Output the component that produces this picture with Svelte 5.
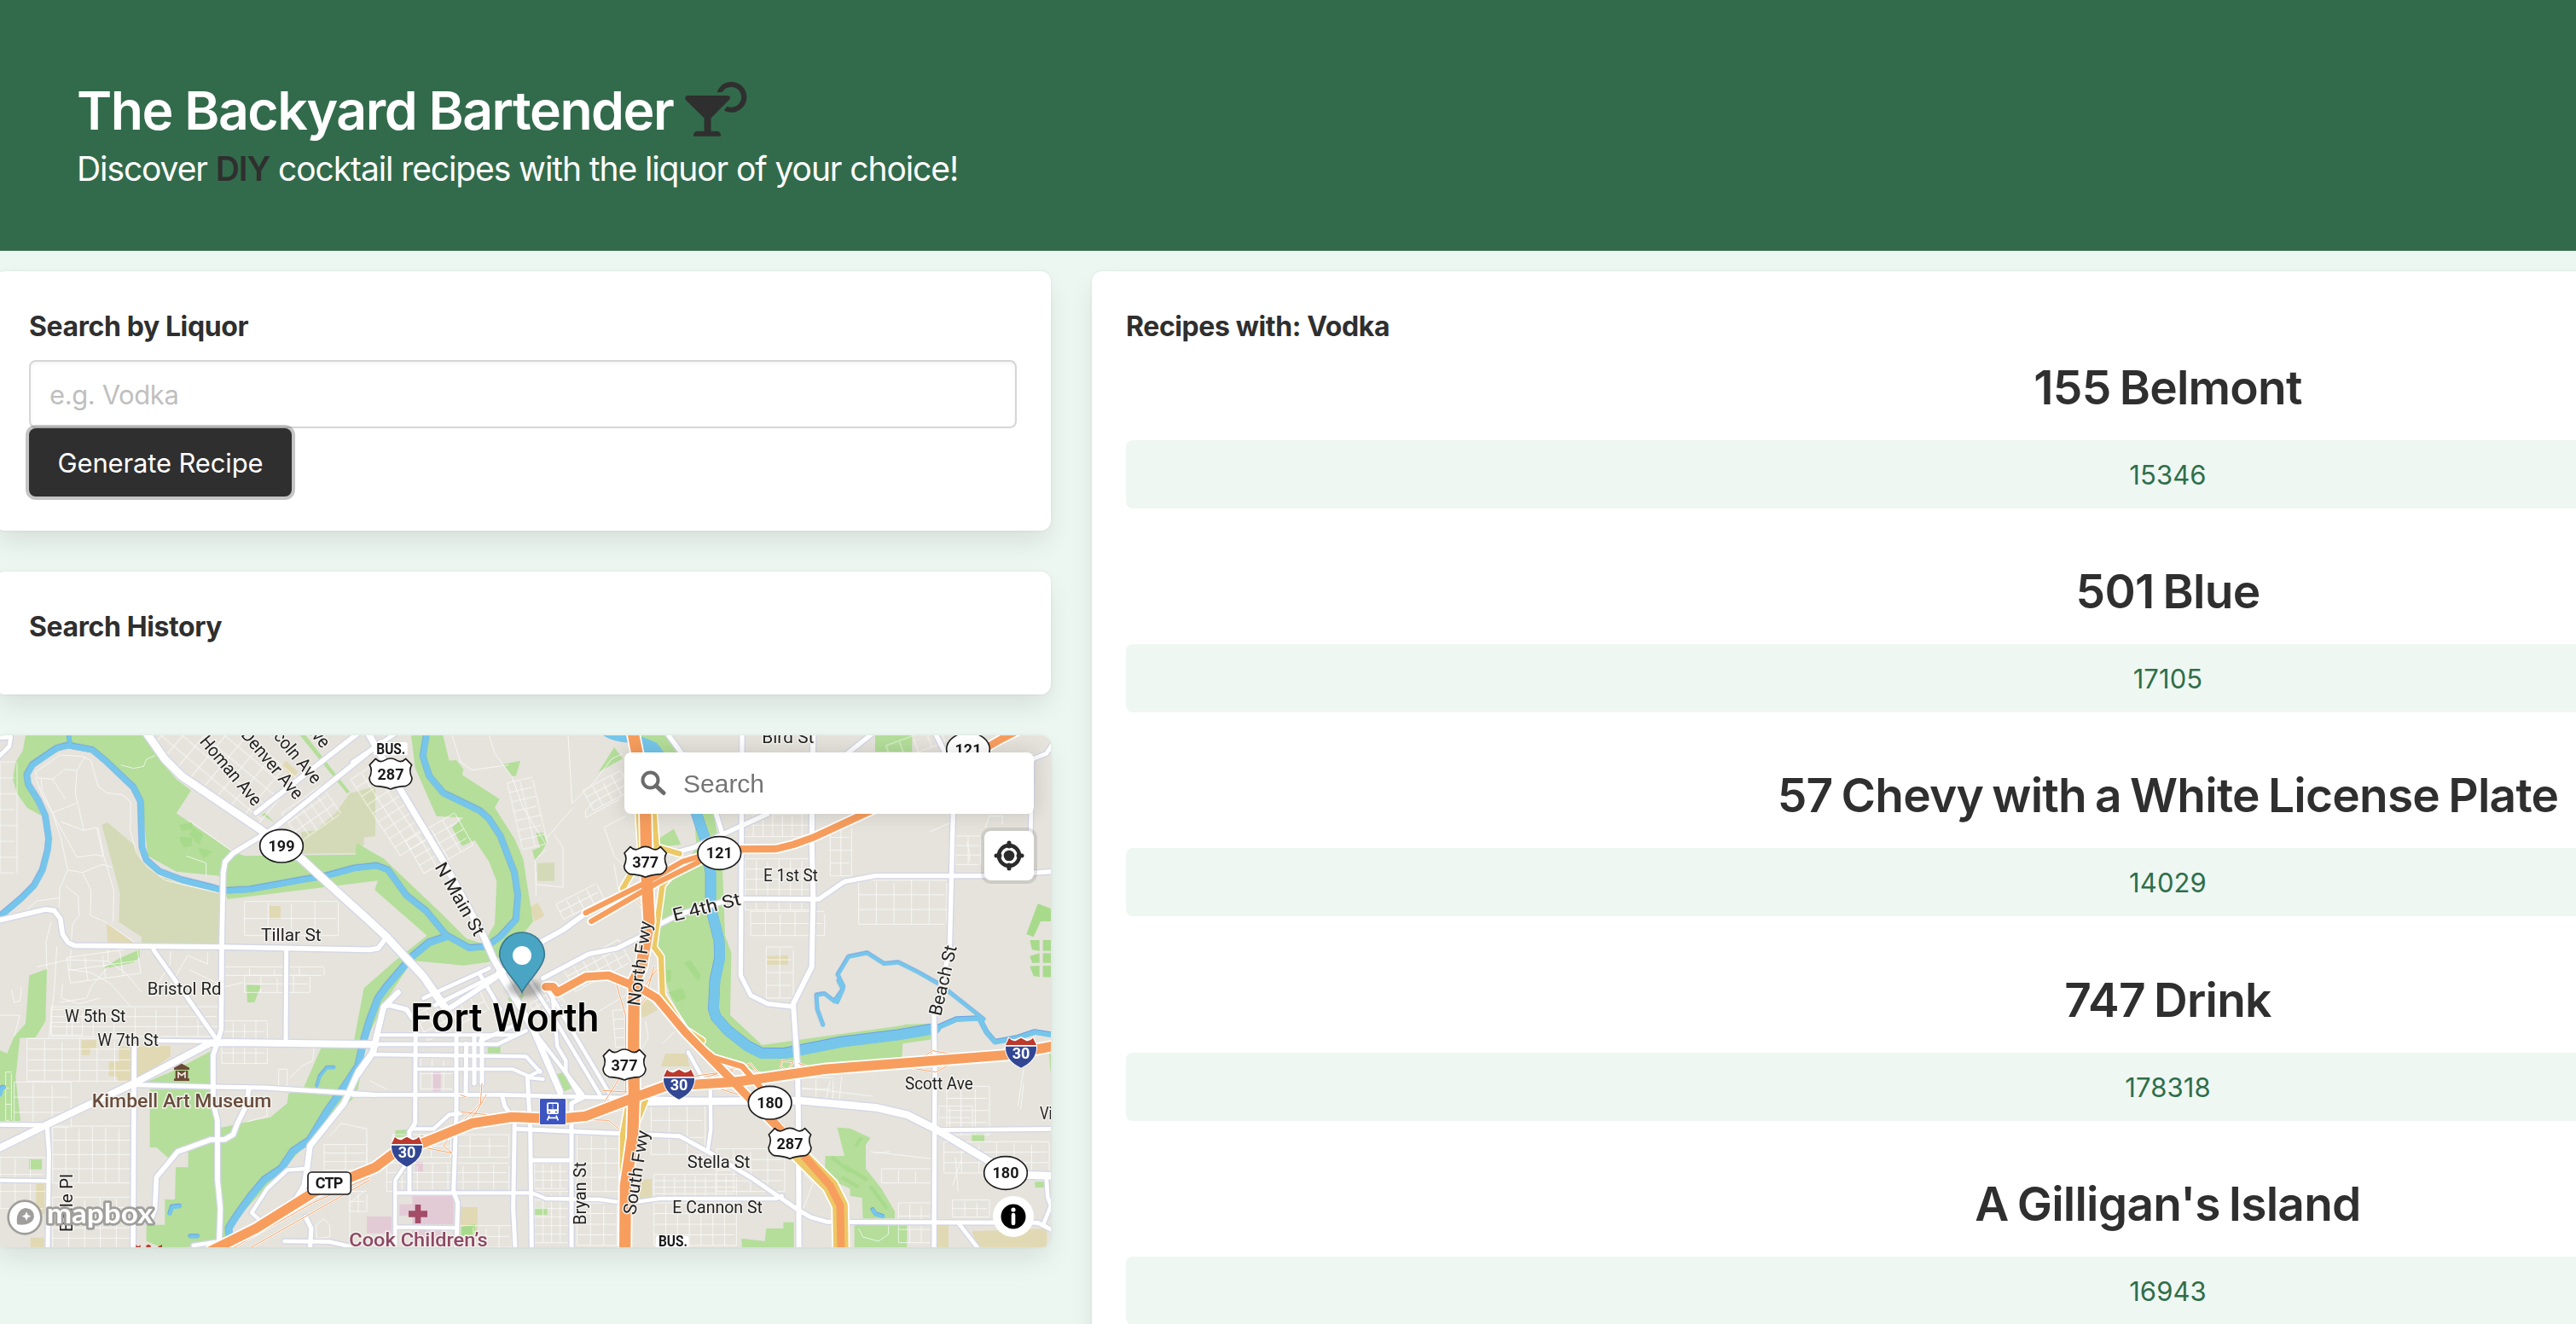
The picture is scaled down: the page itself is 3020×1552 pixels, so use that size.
<script>
  const recipes = [
    { name: '155 Belmont', id: '15346' },
    { name: '501 Blue', id: '17105' },
    { name: '57 Chevy with a White License Plate', id: '14029' },
    { name: '747 Drink', id: '178318' },
    { name: "A Gilligan's Island", id: '16943' },
  ];

  const parks = [
    '90,36 510,36 560,120 620,190 672,230 620,310 810,440 860,460 1250,455 1254,415 1350,470 1340,545 800,612 770,530 620,515 520,460 500,280 470,220 325,90 240,75 115,140 90,190 110,230 145,318 95,290 60,240 45,190 55,130 80,90',
    '1260,420 1350,470 1550,660 1640,750 1700,770 1740,700 1747,550 1720,480 1670,405 1625,425 1590,360 1630,325 1535,320 1460,150 1446,36 1558,36 1580,125 1605,123 1630,155 1625,175 1757,260 1740,290 1810,400 1840,470 1854,560 1875,690 1820,760 1740,830 1630,845 1450,828 1360,965 1290,1100 1245,1110 1280,925 1400,820 1502,740 1318,580 1338,520 1260,553',
    '527,1280 752,1280 765,1390 780,1415 870,1395 950,1380 1010,1330 1015,1295 1068,1275 1130,1134 1285,1134 1255,1300 1090,1460 820,1750 800,1812 700,1826 600,1850 515,1815 515,1757 580,1757 580,1668 615,1668 618,1555 662,1555 662,1495 590,1520 550,1485 527,1485',
    '490,1265 600,1220 745,1145 745,1270',
    '103,880 165,858 160,1040 125,1098 70,1100 55,1240 72,1392 -20,1392 -20,1135 25,1155 50,1095 90,1050',
    '102,1527 147,1527 147,1562 102,1562',
    '358,858 420,820 490,790 492,815 470,835',
    '867,913 922,915 910,935 895,975 870,975',
    '1055,36 1075,36 1230,235 1220,240',
    '920,315 932,308 965,342',
    '2320,600 2400,500 2450,430 2440,312 2510,312 2540,480 2550,740 2572,800 2568,1020 2680,1125 3175,1056 3185,1052 3280,1050 3280,1105 3175,1120 3172,1170 2810,1200 2690,1222 2600,1200 2460,1130 2410,1050 2360,960 2310,800 2320,720',
    '2250,36 2350,36 2382,96 2300,96',
    '2105,165 2160,78 2190,118',
    '1770,137 1830,125 1815,178 1800,180',
    '1885,380 1910,378 1923,415 1905,445 1882,475 1872,440 1900,430',
    '2315,400 2370,365 2395,420 2310,430',
    '3078,36 3208,36 3208,94 3078,94',
    '2945,1415 2990,1418 3062,1452 3045,1475 3045,1560 3100,1630 3147,1710 3147,1735 3035,1735 3032,1662 2990,1655 2990,1630 2900,1590 2903,1515 2970,1515',
    '3005,1758 3190,1758 3190,1840 3005,1840',
    '2608,1805 2690,1815 2695,1770 2755,1770 2755,1748 2792,1748 2792,1840 2610,1840',
    '3418,1438 3462,1438 3462,1463 3418,1463',
    '3640,1606 3672,1606 3672,1626 3640,1626',
    '3690,1150 3700,1150 3700,1215 3694,1215',
    '1715,1130 1760,1130 1760,1155 1715,1155',
    '1955,1230 2000,1212 2015,1275 1980,1290 1965,1250',
    '1785,960 1845,945 1830,975 1800,985',
    '1880,1698 1925,1698 1925,1722 1880,1722',
    '1390,1425 1435,1422 1435,1448 1390,1448',
    '2000,1318 2020,1318 2010,1335 1998,1335',
  ];
  const lushParks = [
    '3650,628 3696,645 3696,690 3660,690 3635,745 3610,735',
    '3622,756 3656,756 3656,794 3630,790', '3668,756 3696,756 3696,794 3668,794',
    '3622,812 3656,802 3656,836 3630,836', '3668,802 3696,802 3696,836 3668,836',
    '3622,848 3656,846 3656,886 3635,882', '3668,846 3696,846 3696,886 3668,886',
    '630,350 675,342 680,365 640,372', '630,392 675,395 675,425 645,430', '680,360 715,385 700,420 665,385', '695,430 750,445 715,468',
    '2340,860 2360,860 2360,900 2340,905', '2405,835 2430,828 2465,880 2455,900', '2350,940 2400,925 2415,960 2380,975',
    '1620,1765 1670,1755 1675,1800 1615,1800',
  ];
  const golf = [
    '358,350 378,342 470,420 500,480 560,530 640,560 770,590 778,768 498,768 498,745 418,692 422,590',
    '1060,376 1110,370 1180,310 1230,240 1320,215 1320,390 1280,395 1280,420 1255,450 1060,452',
    '1890,485 1950,483 1950,548 1890,548',
  ];
  const schools = [
    '375,695 470,765 378,765', '287,1108 345,1108 345,1135 320,1135 315,1160 287,1160',
    '418,1130 600,1128 600,1165 480,1250 418,1255 410,1235 383,1235 383,1183 418,1183',
    '1620,1695 1680,1695 1680,1805 1620,1805', '2250,1597 2292,1597 2292,1665 2250,1665',
    '2340,1155 2415,1155 2425,1200 2325,1200', '3290,1758 3336,1758 3336,1840 3290,1840',
    '3418,1780 3682,1770 3682,1840 3440,1840', '2698,812 2772,810 2772,842 2698,842',
    '948,636 987,636 987,683 948,683', '127,1610 157,1610 157,1720 127,1720', '107,1802 155,1802 155,1840 107,1840',
    '1005,125 1048,165 1030,185 990,145', '1865,640 1892,625 1915,670 1880,690', '2240,980 2280,965 2315,1000 2260,1030',
  ];
  const hospitals = [
    '1450,1655 1595,1655 1595,1755 1450,1755', '1405,1685 1450,1685 1450,1725 1405,1725',
    '1290,1728 1377,1728 1377,1787 1290,1787', '1522,1220 1550,1220 1550,1288 1522,1288',
    '1462,1535 1488,1535 1488,1570 1462,1570',
    '1450,1775 1565,1775 1565,1815 1450,1815',
  ];

  // Grids of small residential streets: x, y, width, height, columns, rows, rotation
  const blocks = [
    [2615, 312, 240, 80, 7, 2, 0], [2620, 470, 240, 180, 6, 5, 0], [2920, 350, 75, 180, 2, 4, 0],
    [2640, 655, 260, 85, 5, 2, 0], [3020, 545, 310, 155, 5, 3, 0], [3360, 390, 90, 100, 2, 3, 0],
    [2695, 780, 95, 180, 2, 4, 0], [790, 850, 350, 30, 4, 1, 0], [860, 620, 330, 120, 4, 2, 0],
    [95, 1102, 370, 150, 6, 4, 0], [50, 1255, 200, 160, 3, 3, 0], [185, 1410, 280, 200, 6, 4, 0],
    [185, 1660, 280, 180, 5, 5, 0], [0, 1520, 160, 180, 3, 3, 0], [180, 990, 590, 105, 8, 3, 0],
    [780, 1040, 160, 150, 4, 4, 0], [1140, 1475, 150, 90, 2, 3, 0], [1230, 1640, 60, 70, 2, 2, 0],
    [1360, 1540, 430, 100, 8, 3, 0], [1380, 1440, 410, 80, 6, 2, 0], [1620, 1760, 180, 76, 4, 2, 0],
    [1880, 1540, 120, 90, 4, 3, 0], [1880, 1640, 120, 180, 4, 6, 0], [2030, 1440, 150, 200, 3, 4, 0],
    [2300, 1580, 290, 90, 8, 4, 0], [2300, 1680, 290, 150, 7, 4, 0], [2030, 1680, 140, 150, 3, 4, 0],
    [2520, 1490, 240, 150, 4, 4, 0], [2810, 1240, 120, 80, 2, 2, 0], [3300, 1340, 120, 80, 3, 2, 0],
    [3320, 1465, 370, 110, 6, 3, 0], [3330, 1270, 150, 170, 3, 4, 0], [3160, 1680, 120, 140, 3, 3, 0],
    [3350, 1670, 130, 60, 3, 2, 0], [3100, 1560, 180, 50, 3, 1, 0], [1480, 1170, 120, 110, 3, 2, 0],
    [2290, 1330, 190, 180, 3, 3, 0], [20, 1220, 20, 170, 1, 3, 0], [860, 880, 230, 60, 4, 2, 0],
    [560, 10, 460, 240, 8, 5, 40], [1010, 250, 170, 120, 5, 3, -35], [1445, 350, 200, 130, 4, 4, -30],
    [1810, 190, 90, 240, 2, 7, -13], [2060, 190, 150, 80, 4, 3, -28], [1960, 590, 160, 60, 4, 2, -27],
    [1990, 800, 220, 90, 6, 3, -28], [1470, 960, 240, 100, 6, 3, -27], [1870, 950, 110, 60, 5, 3, -30],
    [180, 1000, 110, 90, 2, 2, 0], [240, 800, 250, 90, 4, 2, -8], [0, 130, 60, 390, 1, 7, 0],
    [1310, 130, 130, 320, 3, 9, -33], [2160, 1000, 80, 130, 2, 4, -5], [3120, 36, 200, 60, 4, 1, -20],
  ];
  const gridPath = ([x, y, w, h, c, r]) => {
    let d = '';
    for (let i = 0; i <= c; i++) {
      const px = x + (w * i) / c;
      d += `M${px} ${y + (i % 3) * 5}V${y + h}`;
    }
    for (let j = 0; j <= r; j++) {
      const py = y + (h * j) / r;
      d += `M${x} ${py}H${x + w - (j % 2) * 8}`;
    }
    return d;
  };

  const lanes = [
    'M125 185L150 250L185 310L215 400L238 510L210 575L208 640M130 185L125 165L210 105L290 110L320 125L345 215L375 238L430 245L460 270L458 370L480 450L520 500L580 545L680 570L770 590',
    'M145 190L148 230L200 340L235 400L270 465L340 455L362 462L340 360L295 370L265 240L270 160L300 110M130 185L185 190L230 155L270 160M185 190L230 260M185 308L268 275M215 340L295 370M240 510L290 518L360 490L395 500M290 518L320 580L318 670L355 685M345 360L365 460L400 580L398 690M232 568L275 600L278 670L255 700L250 770M360 685L475 765',
    'M95 648L130 618L205 608M180 690L162 760L165 860M425 140L470 152L505 145L515 120L545 107M665 335L815 442M655 460L725 485L725 530',
    'M200 780L190 940L172 1100M250 790L245 860L320 870L390 910L460 990M130 850L240 825L380 830L440 870L500 940M380 790V830M380 850L320 920L305 960L210 975M600 795L598 840L550 920M660 810L620 880L590 930M660 810L730 840V800M665 860L790 920L855 905',
    'M40 930L50 975L70 970L75 920M220 910L215 960L280 980L350 960M0 1020L70 1020L50 1095',
    'M1105 1130L1100 1180L1060 1200L1020 1240M980 1210H1010V1270H980ZM870 1395L940 1375L935 1300M1160 1445L1200 1400L1290 1420V1540M1230 1840L1230 1680L1280 1640M1110 1760L1140 1735L1160 1760L1160 1800L1115 1805Z',
    'M1590 36L1620 130L1660 158L1790 140M1720 36L1740 100L1800 180L1840 290L1920 420M1920 438L1882 475L1885 560L1980 570M1998 36L2012 275L2090 200L2150 120L2190 100M2012 295L1920 400M1950 385L1980 430V570M2125 360L2160 460L2240 540M2125 360L2200 320M1885 520V600M2095 265L2060 300L2060 325L2180 260M2160 490L2175 580',
    'M3600 1210L3580 1340M3380 1530L3350 1620M3600 1260L3590 1350M2820 1275L3070 1305M3060 1500L3280 1525M3080 1505L3130 1500M3360 1520L3370 1640M2830 1580L2860 1610L2825 1700M3020 1770L3035 1800L3090 1815L3125 1790L3125 1760M2960 1235L2950 1340M2920 1250L2900 1340M3270 375L3340 345M3465 360L3480 320H3525V350M3400 410L3410 445V480M3470 375V470',
    'M2050 1040L2200 950M2270 1040L2280 1100L2250 1150M1300 1250L1360 1280M2330 1120L2370 1080',
  ].join('');

  const water = [
    ['M10 665L75 610L120 565L150 510L168 440L172 400L160 320L135 265L100 210L95 175L115 140L200 82L240 72L325 88L370 125L470 220L495 270L500 430L515 475L560 515L640 545L740 570L790 583L880 578L1060 545L1150 530L1250 503L1325 495L1365 510L1430 600L1500 655L1570 740L1650 784L1710 780L1760 745L1815 685L1822 600L1810 520L1760 390L1720 330L1690 303L1560 240L1510 180L1488 110L1500 36', 20],
    ['M240 20L248 72', 14],
    ['M1570 745L1510 765L1450 815L1360 920L1330 962L1300 1040L1280 1110L1260 1200L1200 1290L1150 1360L1090 1460L1030 1500L990 1560L930 1600L880 1660L830 1730L805 1770L808 1810', 23],
    ['M2450 312L2480 400L2500 520L2500 640L2530 760L2532 820L2515 900L2510 1000L2520 1030L2560 1075L2630 1130L2680 1155L2760 1155L2960 1115L3160 1090L3290 1068', 36],
    ['M3290 1068L3365 1035L3445 1032L3470 1080L3500 1115L3580 1100L3640 1080L3700 1090', 17],
    ['M3460 1035L3340 940L3300 910L3230 870L3160 835L3110 840L3050 802L2985 815L2947 878L2967 920L2945 975L2965 930M2950 900L2965 930L2935 972L2900 945L2872 950L2875 1000L2895 1055', 12],
    ['M1115 1270L1125 1235L1150 1205L1175 1205', 9],
    ['M598 1718L605 1695L632 1692M670 1798H695M0 1300L8 1275L14 1275M3070 1705L3080 1720L3105 1728', 13],
  ];

  const streets = [
    ['M-18 690L160 648L190 652L212 680L220 735L240 765L262 775L780 780L1300 790L1330 785L1360 745', 17],
    ['M510 20L580 120L640 180L920 370L1060 470L1190 590L1290 680L1360 745L1420 810L1490 885L1570 1000', 27],
    ['M1340 60L960 365L820 450L792 480L785 520L780 780L778 1070L765 1115L750 1160L750 1330L765 1390L765 1600L775 1700L770 1840', 17],
    ['M900 308L1270 20', 17], ['M-18 45L38 42L32 75L-18 125', 14], ['M1290 20L1320 70', 15],
    ['M540 790L660 960L765 1110', 15], ['M1007 790L1005 1115', 15],
    ['M-18 1495L165 1405L480 1255L740 1118L800 1116L1320 1123', 24],
    ['M560 1110L760 1112', 13], ['M480 1265L750 1272L930 1275L1320 1300', 15],
    ['M472 1130L468 1840', 17], ['M-18 1405L165 1407L172 1500L168 1840', 15], ['M-18 1600L165 1603', 13],
    ['M875 1280L865 1340L835 1400L820 1440L790 1457L740 1458L625 1500L550 1590L545 1700L530 1740L470 1750', 17],
    ['M1400 940L1350 990L1310 1150L1260 1220L1210 1330L1090 1480L1080 1560L1070 1620L1040 1670', 20],
    ['M1070 1560L1010 1565L940 1630L885 1715L930 1755L1010 1685L1040 1670', 13],
    ['M1075 1730L1095 1770L1090 1840', 16], ['M680 1830L780 1815L860 1810M1000 1815L1160 1817L1260 1840', 14],
    ['M1290 20L1410 230L1560 480L1700 740L1735 820L1780 900L1880 1080L1970 1290', 22],
    ['M1240 130L1390 30', 14], ['M1570 1000L1590 990L1740 890L1890 770L1980 720L2070 655', 18],
    ['M1750 870L1880 1080L2050 1300M1850 880L1960 1050L2110 1300M1920 920L2140 1290', 13],
    ['M1690 880L1760 1000M1490 960L1720 855M1530 985L1760 870M1690 1110L1820 1050', 14],
    ['M1910 890L2070 805L2170 785L2250 745L2320 700L2390 665L2580 610L2880 612L2970 550L3080 530L3500 530L3700 515', 16],
    ['M2610 20L2605 880L2640 950L2700 980L2790 990', 16], ['M2860 20L2855 400L2860 610L2855 850L2790 980L2805 1200L2808 1400L2810 1840', 18],
    ['M3352 312L3340 790L3285 1020L3288 1200L3285 1840', 16], ['M3625 380L3630 120L3680 100L3700 70', 14],
    ['M3080 20L2980 100M2700 312L2440 430L2370 450M2500 250L2540 380M3285 20L3330 110M2340 20L2420 130', 16],
    ['M2280 1325L2810 1320L3080 1345L3190 1370L3290 1420L3490 1540L3540 1580L3700 1585', 26],
    ['M3310 1424L3700 1420', 14],
    ['M1390 1645L1870 1645L1920 1665L2110 1668L2180 1678L2250 1675L2320 1665L2730 1665L2750 1655', 13],
    ['M1810 1420L2390 1445L2490 1500L2640 1590L2800 1700L2850 1730L2910 1747L3650 1750L3700 1775', 15],
    ['M3370 1750L3440 1840M3700 1680L3670 1755M3680 1590L3685 1660L3700 1700', 14],
    ['M1240 1300L1760 1300L2150 1310L2580 1320', 14], ['M1240 1122L1750 1122L1850 1075M1310 1158L1850 1165L1900 1220', 13],
    ['M1320 1090H1810M1470 1210L1805 1210L1860 1235L1900 1215M1860 1240L1910 1245', 12],
    ['M1462 1060L1460 1400L1440 1430L1440 1640M1605 1090V1370L1595 1640L1610 1680L1605 1840M1640 1120L1638 1290M1668 1090V1260M1695 1090V1260', 15],
    ['M1855 1240L1865 1420L1870 1840M1765 1300L1775 1340L1810 1390L1805 1700L1812 1840M1870 1530H2010M2010 1840V1330L2050 1310', 15],
    ['M1390 1840V1600L1430 1540M1390 1765L1600 1768M1450 1420H1525L1580 1370L1620 1365', 13],
    ['M1260 1230L1315 1150L1350 990L1370 985L1430 1000L1450 1030', 17],
    ['M2498 1280L2500 1420L2490 1490M2420 1150L2470 1240M1940 920L1960 1130L1990 1180L1990 1220L2040 1310', 13],
  ];
  const frontage = ['M2245 300L2255 460L2190 575M2315 430L2390 452M2390 500L2330 560L2300 780L2325 815L2330 950L2410 1070L2470 1110', 'M2270 1320L2230 1420L2210 1560M2210 1330L2190 1440L2187 1840', 'M2300 312L2310 440'];
  const freeways = [
    ['M2225 20L2245 120L2270 312L2275 540L2283 690L2255 850L2230 900L2228 1150L2230 1300L2225 1450L2200 1620L2198 1840', 40],
    ['M740 1850L900 1770L1100 1645L1320 1555L1380 1510L1500 1465L1660 1400L1800 1378L1960 1385L2060 1375L2230 1310L2340 1270L2580 1255L2660 1245L2900 1210L3540 1160L3700 1130', 34],
    ['M2060 660L2260 560L2400 480L2480 455M2080 690L2320 550L2460 480', 19],
    ['M2600 436L2730 435L2790 420L2860 395L3040 312L3200 240L3400 120L3520 50L3600 10', 25],
    ['M1920 920H1945L1960 940L2060 885L2140 880L2260 930L2310 960L2410 1080L2580 1255L2740 1420', 28],
    ['M2460 1130L2510 1170L2610 1200L2680 1280', 20],
  ];
  const ramps =
    'M2165 900L2200 1020L2200 1290M2260 640L2220 600M2300 850L2270 960L2240 1000M2310 860L2250 940M2180 1240L2110 1350L1960 1390M2120 1285L2200 1290L2400 1240L2580 1215M2190 1350L1990 1395M2020 1385L2140 1390L2190 1430M1695 1260L1690 1330L1620 1400M1710 1300L1670 1370L1560 1450M1620 1300L1640 1308M1620 1360L1800 1380M1490 1485L1590 1505L1560 1480L1580 1450M1480 1445L1560 1440M2460 1245L2640 1190L2680 1240M2500 1270L2600 1300L2780 1310M2750 1180L2790 1185L2770 1215L2745 1200ZM2810 1190L2870 1210M3230 1175L3280 1145L3340 1155L3370 1165M3200 1205L3290 1220L3350 1190M800 1850L1100 1680L1300 1590M860 1850L1300 1600';

  const labels = [
    ['Tillar St', 918, 758, 212], ['Bristol Rd', 518, 948, 260], ['W 5th St', 228, 1045, 214], ['W 7th St', 343, 1128, 215],
    ['E 1st St', 2685, 550, 192], ['Bird St', 2680, 62, 183], ['Scott Ave', 3183, 1280, 239], ['Stella St', 2417, 1558, 221],
    ['E Cannon St', 2365, 1715, 317], ['Vi', 3657, 1386, 44],
  ];
  // Labels that follow a street: text, centre, angle, length
  const turned = [
    ['Homan Ave', 812, 160, 50, 300], ['Denver Ave', 958, 137, 50, 300], ['Lincoln Ave', 1022, 82, 50, 300], ['Grove Ave', 1062, -32, 50, 270],
    ['N Main St', 1617, 612, 60, 285], ['North Fwy', 2250, 838, -82, 300], ['Beach St', 3317, 898, -77, 252],
    ['E 4th St', 2485, 640, -14, 245], ['South Fwy', 2238, 1573, -81, 300], ['Bryan St', 2040, 1647, -90, 222], ['Belle Pl', 234, 1680, -90, 205],
  ];
  const stateRoutes = [['199', 990, 425], ['121', 2530, 450], ['121', 3405, 85], ['180', 2708, 1328], ['180', 3537, 1575]];
  const usRoutes = [['287', 1374, 170], ['377', 2270, 480], ['377', 2196, 1193], ['287', 2778, 1470]];
  const interstates = [[1431, 1500], [2388, 1263], [3591, 1152]];
</script>

<header class="hero">
  <h1>
    <span class="brand">The Backyard Bartender</span>
    <svg class="glass" viewBox="0 0 220 196" aria-hidden="true">
      <path d="M8 48H152Q164 50 158 62L92 128V174H114Q127 176 127 192H30Q30 176 44 174H68V128L3 64Q-4 52 8 48Z" />
      <path d="M113 37A54 54 0 1 1 138 101L149 87A36 36 0 1 0 132 36Z" />
    </svg>
  </h1>
  <p>Discover <strong>DIY</strong> cocktail recipes with the liquor of your choice!</p>
</header>

<main>
  <div class="side">
    <section class="card">
      <label for="liquor">Search by Liquor</label>
      <input id="liquor" type="text" placeholder="e.g. Vodka" />
      <button class="generate">Generate Recipe</button>
    </section>

    <section class="card">
      <h2>Search History</h2>
    </section>

    <section class="map">
      <svg class="canvas" viewBox="-18 36 3714 1800" preserveAspectRatio="none">
        <rect x="-18" y="0" width="3720" height="1850" fill="#e5e3dc" />
        {#each golf as p}<polygon points={p} fill="#d4dab7" />{/each}
        {#each schools as p}<polygon points={p} fill="#e1d9b3" />{/each}
        {#each hospitals as p}<polygon points={p} fill="#e3cbd6" />{/each}
        {#each parks as p}<polygon points={p} fill="#b4de9a" />{/each}
        {#each lushParks as p}<polygon points={p} fill="#a8da8c" />{/each}
        <path d="M2120 30H2210V62Q2160 60 2120 36ZM2245 36L2310 62L2335 96H2255Z" fill="#76c6eb" />
        <path d="M2925 1520L2990 1570M2960 1590L3020 1625M2970 1550L3050 1600M3060 1620L3120 1700M3010 1480L3030 1450" class="fairway" />

        <g class="lanes">
          {#each blocks as b}
            <path d={gridPath(b)} transform="rotate({b[6]} {b[0] + b[2] / 2} {b[1] + b[3] / 2})" />
          {/each}
          <path d={lanes} />
        </g>

        <g class="line">
          {#each water as [d, w]}<path {d} stroke="#6c9fe6" stroke-width={w + 2} transform="translate(-1 -2)" />{/each}
          {#each water as [d, w]}<path {d} stroke="#76c6eb" stroke-width={w} />{/each}
          {#each streets as [d, w]}<path {d} stroke="#d3d6e5" stroke-width={w + 8} />{/each}
          {#each streets as [d, w]}<path {d} stroke="#fff" stroke-width={w} />{/each}
          <path d={ramps} stroke="#fff" stroke-width="7" />
          <path d={ramps} stroke="#f79e5e" stroke-width="3" />
          {#each frontage as d}<path {d} stroke="#fff" stroke-width="28" />{/each}
          {#each frontage as d}<path {d} stroke="#ecc966" stroke-width="19" />{/each}
          {#each freeways as [d, w]}<path {d} stroke="#fff" stroke-width={w + 11} />{/each}
          <path d="M2800 1500L2920 1620L2955 1690L2958 1860" stroke="#fff" stroke-width="64" />
          <path d="M2800 1500L2920 1620L2955 1690L2958 1860" stroke="#ecc966" stroke-width="53" />
          <path d="M2700 1370L2920 1620L2955 1690L2958 1860" stroke="#f79e5e" stroke-width="27" />
          {#each freeways as [d, w]}<path {d} stroke="#f79e5e" stroke-width={w} />{/each}
        </g>

        <g class="labels">
          {#each labels as [t, x, y, w]}<text {x} {y} textLength={w} lengthAdjust="spacingAndGlyphs">{t}</text>{/each}
          {#each turned as [t, x, y, a, w]}
            <text text-anchor="middle" transform="translate({x} {y}) rotate({a})" y="21" textLength={w} lengthAdjust="spacingAndGlyphs">{t}</text>
          {/each}
          <text class="museum" x="323" y="1343" textLength="632" lengthAdjust="spacingAndGlyphs">Kimbell Art Museum</text>
          <text class="hospital" x="1228" y="1834" textLength="487" lengthAdjust="spacingAndGlyphs">Cook Children’s</text>
          <text class="city" x="1443" y="1078" textLength="664" lengthAdjust="spacingAndGlyphs">Fort Worth</text>
        </g>

        <path d="M612 1205L639 1190L666 1205V1212H612ZM617 1215H661V1243H666V1251H612V1243H617Z" fill="#6b4a35" />
        <path d="M627 1241V1222L639 1232L651 1222V1241" fill="none" stroke="#f3efe8" stroke-width="5" />
        <path d="M1460 1686H1480V1708H1503V1730H1480V1752H1460V1730H1437V1708H1460Z" fill="#a34d68" />

        <g class="badge">
          {#each stateRoutes as [n, x, y]}
            <ellipse cx={x} cy={y} rx="76" ry="58" />
            <text {x} y={y + 19}>{n}</text>
          {/each}
          {#each usRoutes as [n, x, y]}
            <path transform="translate({x} {y})" d="M-53 -52Q-38 -36 -22 -46Q0 -60 22 -46Q38 -36 53 -52L74 -30Q62 -12 75 16Q74 36 54 44Q20 46 0 55Q-20 46 -54 44Q-74 36 -75 16Q-62 -12 -74 -30Z" />
            <text {x} y={y + 22}>{n}</text>
          {/each}
          <rect x="1083" y="1572" width="151" height="78" rx="14" />
          <text x="1158" y="1629" textLength="98">CTP</text>
          <rect class="plate" x="1314" y="60" width="119" height="46" rx="8" />
          <text x="1375" y="102" textLength="102" lengthAdjust="spacingAndGlyphs">BUS.</text>
          <rect class="plate" x="2306" y="1796" width="116" height="46" rx="8" />
          <text x="2367" y="1834" textLength="102" lengthAdjust="spacingAndGlyphs">BUS.</text>
        </g>
        {#each interstates as [x, y]}
          <g transform="translate({x} {y})">
            <path d="M-45 -56Q-30 -44 -20 -48L0 -56L20 -48Q30 -44 45 -56L57 -24Q60 28 0 56Q-60 28 -57 -24Z" fill="#fff" />
            <path d="M-42 -52Q-30 -38 -18 -42L0 -52L18 -42Q30 -38 42 -52L54 -27H-54Z" fill="#bb3a2d" />
            <path d="M-54 -22H54Q56 26 0 53Q-56 26 -54 -22Z" fill="#324793" />
            <text class="interstate" y="22">30</text>
          </g>
        {/each}
        <path d="M478 1828l8 6 8-6v10h-16zM514 1830l8-4 8 4v8h-16zM556 1834l14-7v10h-14z" fill="#bb3a2d" />
        <g transform="translate(1944 1359)">
          <rect x="-47" y="-47" width="94" height="94" rx="6" fill="#fff" />
          <rect x="-45" y="-45" width="90" height="90" rx="4" fill="#3d55c0" />
          <rect x="-21" y="-32" width="42" height="41" rx="6" fill="#fff" />
          <path d="M-15 -27H-1V-8H-15ZM1 -27H15V-8H1ZM-15 -1h6v5h-6zM9 -1h6v5h-6z" fill="#3d55c0" />
          <path d="M-12 14L-19 31M12 14L19 31M-15 22H15" stroke="#fff" stroke-width="5" fill="none" />
        </g>

        <ellipse cx="1846" cy="925" rx="62" ry="30" class="pin-shadow" />
        <path d="M1836 940C1828 915 1757 850 1757 808A79 79 0 0 1 1915 808C1915 850 1844 915 1836 940Z" fill="#4aa5c4" stroke="#38788d" stroke-width="5" />
        <circle cx="1836" cy="810" r="33" fill="#fff" />

        <g class="mapbox">
          <circle cx="87" cy="1731" r="58" />
          <path d="M60 1756Q54 1705 90 1698Q122 1702 120 1730Q112 1762 60 1756Z" />
          <path class="spark" d="M93 1711L98 1722L109 1727L98 1732L93 1743L88 1732L77 1727L88 1722Z" />
          <text x="164" y="1751" textLength="374" lengthAdjust="spacingAndGlyphs">mapbox</text>
        </g>
      </svg>

      <div class="controls">
        <div class="geocoder">
          <svg viewBox="0 0 30 30" aria-hidden="true">
            <circle cx="11.5" cy="11.5" r="9" fill="none" stroke="#6b6b6b" stroke-width="4" />
            <path d="M18 18L27 26.5" stroke="#6b6b6b" stroke-width="5" stroke-linecap="round" />
          </svg>
          <span>Search</span>
        </div>
        <button class="locate" aria-label="Find my location">
          <svg viewBox="0 0 36 36" aria-hidden="true">
            <circle cx="18" cy="18" r="12" fill="none" stroke="#2b2b2b" stroke-width="4.5" />
            <circle cx="18" cy="18" r="6.3" fill="#2b2b2b" />
            <path d="M18 3V7M18 29V33M3 18H7M29 18H33" stroke="#2b2b2b" stroke-width="5" stroke-linecap="round" />
          </svg>
        </button>
        <button class="info" aria-label="Toggle attribution">
          <svg viewBox="0 0 48 48" aria-hidden="true">
            <circle cx="24" cy="24" r="14.5" />
            <path d="M24 22V32" fill="none" stroke="#fff" stroke-width="4.6" stroke-linecap="round" />
            <circle cx="24" cy="16" r="2.6" fill="#fff" />
          </svg>
        </button>
      </div>
    </section>
  </div>

  <section class="card recipes">
    <h2>Recipes with: Vodka</h2>
    {#each recipes as recipe}
      <article>
        <h3>{recipe.name}</h3>
        <div class="recipe-id">{recipe.id}</div>
      </article>
    {/each}
  </section>
</main>

<style>
  :global(html) {
    overflow: hidden;
  }
  :global(body) {
    height: 1552px;
    overflow: hidden;
    background: #edf7f2;
    color: #2f2f2f;
    font-family: Inter, 'Liberation Sans', sans-serif;
    font-size: 31px;
  }
  h1, h2, h3, p {
    margin: 0;
  }
  .hero {
    box-sizing: border-box;
    height: 294px;
    padding: 93px 90px 0;
    background: #326b4b;
    color: #fff;
  }
  h1 {
    display: flex;
    align-items: flex-start;
    gap: 14px;
    height: 72px;
    font-size: 62.5px;
    line-height: 72px;
    font-weight: 600;
  }
  .brand {
    letter-spacing: -1.5px;
  }
  .glass {
    width: 73px;
    height: 65px;
    margin-top: 3px;
    fill: #2f2f2f;
  }
  .hero p {
    margin-top: 3px;
    font-size: 39px;
    line-height: 60px;
    letter-spacing: -1.1px;
  }
  .hero strong {
    color: #2f2f2f;
    font-weight: 600;
  }
  main {
    display: flex;
    gap: 48px;
    align-items: flex-start;
    margin: 24px 0 0 -6px;
  }
  .side {
    display: flex;
    flex: none;
    flex-direction: column;
    gap: 48px;
    width: 1238px;
  }
  .card {
    box-sizing: border-box;
    padding: 40px;
    background: #fff;
    border-radius: 12px;
    box-shadow: 0 16px 32px -4px rgba(10, 10, 10, 0.1), 0 0 0 2px rgba(10, 10, 10, 0.02);
  }
  label, h2 {
    display: block;
    margin-bottom: 16px;
    font-size: 32px;
    line-height: 49px;
    height: 48px;
    font-weight: 700;
    letter-spacing: -0.4px;
  }
  input {
    display: block;
    box-sizing: border-box;
    width: 100%;
    height: 80px;
    padding: 0 22px;
    border: 2px solid #d6d6d6;
    border-radius: 8px;
    box-shadow: inset 0 2px 4px rgba(10, 10, 10, 0.05);
    font: inherit;
    letter-spacing: -0.4px;
  }
  input::placeholder {
    color: #bfbfbf;
    opacity: 1;
  }
  .generate {
    display: block;
    position: relative;
    width: 308px;
    height: 80px;
    padding: 0;
    border: 0;
    border-radius: 8px;
    background: #2f2f2f;
    box-shadow: 0 0 0 4px rgba(47, 47, 47, 0.28);
    color: #fff;
    font: inherit;
    letter-spacing: -0.15px;
  }
  .recipes {
    flex: none;
    width: 2523px;
    height: 1400px;
  }
  .recipes h2 {
    margin: 0;
  }
  article {
    height: 239.2px;
    text-align: center;
  }
  h3 {
    height: 110px;
    font-size: 55px;
    line-height: 96px;
    font-weight: 600;
    letter-spacing: -0.75px;
    word-spacing: -3px;
  }
  .recipe-id {
    height: 80px;
    border-radius: 8px;
    background: #eef7f2;
    color: #2f6e4a;
    line-height: 81px;
    letter-spacing: 0.1px;
  }

  .map {
    position: relative;
    height: 600px;
    border-radius: 12px;
    box-shadow: 0 16px 32px -4px rgba(10, 10, 10, 0.1), 0 0 0 2px rgba(10, 10, 10, 0.02);
  }
  .canvas {
    display: block;
    width: 1238px;
    height: 600px;
    border-radius: 12px;
    overflow: hidden;
  }
  .lanes {
    fill: none;
    stroke: #fff;
    stroke-width: 3;
    opacity: 0.7;
  }
  .fairway {
    fill: none;
    stroke: #a8da8c;
    stroke-width: 13;
  }
  .line {
    fill: none;
    stroke-linecap: round;
    stroke-linejoin: round;
  }
  .labels text {
    fill: #222;
    stroke: #f4f2ee;
    stroke-width: 9;
    stroke-linejoin: round;
    paint-order: stroke;
    font-family: Roboto, sans-serif;
    font-size: 63px;
  }
  .labels .museum {
    fill: #684c3c;
    font-size: 68px;
    font-weight: 500;
  }
  .labels .hospital {
    fill: #8d4865;
    font-size: 68px;
    font-weight: 500;
  }
  .labels .city {
    fill: #000;
    font-size: 141px;
    font-weight: 500;
  }
  .badge ellipse, .badge path, .badge rect {
    fill: #fff;
    stroke: #1d1d1d;
    stroke-width: 5;
    stroke-linejoin: round;
  }
  .badge .plate {
    stroke: none;
  }
  .badge text, .interstate {
    fill: #1a1a1a;
    font-family: Roboto, sans-serif;
    font-size: 54px;
    font-weight: 700;
    text-anchor: middle;
  }
  .interstate {
    fill: #fff;
  }
  .pin-shadow {
    fill: #000;
    opacity: 0.25;
    filter: blur(9px);
  }
  .mapbox circle, .mapbox text {
    fill: #fff;
    stroke: #9f9e9a;
    stroke-width: 8;
  }
  .mapbox path {
    fill: #9f9e9a;
  }
  .mapbox .spark {
    fill: #fff;
  }
  .mapbox text {
    stroke-width: 16;
    stroke-linejoin: round;
    paint-order: stroke;
    font-family: Lato, sans-serif;
    font-size: 100px;
    font-weight: 700;
  }
  .controls {
    position: absolute;
    inset: 0;
    display: flex;
    flex-direction: column;
    align-items: flex-end;
    gap: 20px;
    padding: 20px 20px 12px;
  }
  .geocoder {
    display: flex;
    align-items: center;
    box-sizing: border-box;
    width: 480px;
    height: 72px;
    padding: 2px 0 0 19px;
    gap: 20px;
    border-radius: 8px;
    background: #fff;
    box-shadow: 0 0 20px 4px rgba(0, 0, 0, 0.1);
    color: #757575;
    font-family: 'Liberation Sans', sans-serif;
    font-size: 30px;
  }
  .geocoder svg {
    width: 30px;
    height: 30px;
    margin-top: -3px;
  }
  .locate {
    display: grid;
    place-items: center;
    width: 58px;
    height: 58px;
    padding: 0;
    border: 0;
    border-radius: 8px;
    background: #fff;
    box-shadow: 0 0 0 4px rgba(0, 0, 0, 0.1);
  }
  .locate svg {
    width: 36px;
    height: 36px;
  }
  .info {
    width: 48px;
    height: 48px;
    margin-top: auto;
    padding: 0;
    border: 0;
    border-radius: 24px;
    background: #fff;
  }
  .info svg {
    display: block;
    width: 48px;
    height: 48px;
  }
</style>
